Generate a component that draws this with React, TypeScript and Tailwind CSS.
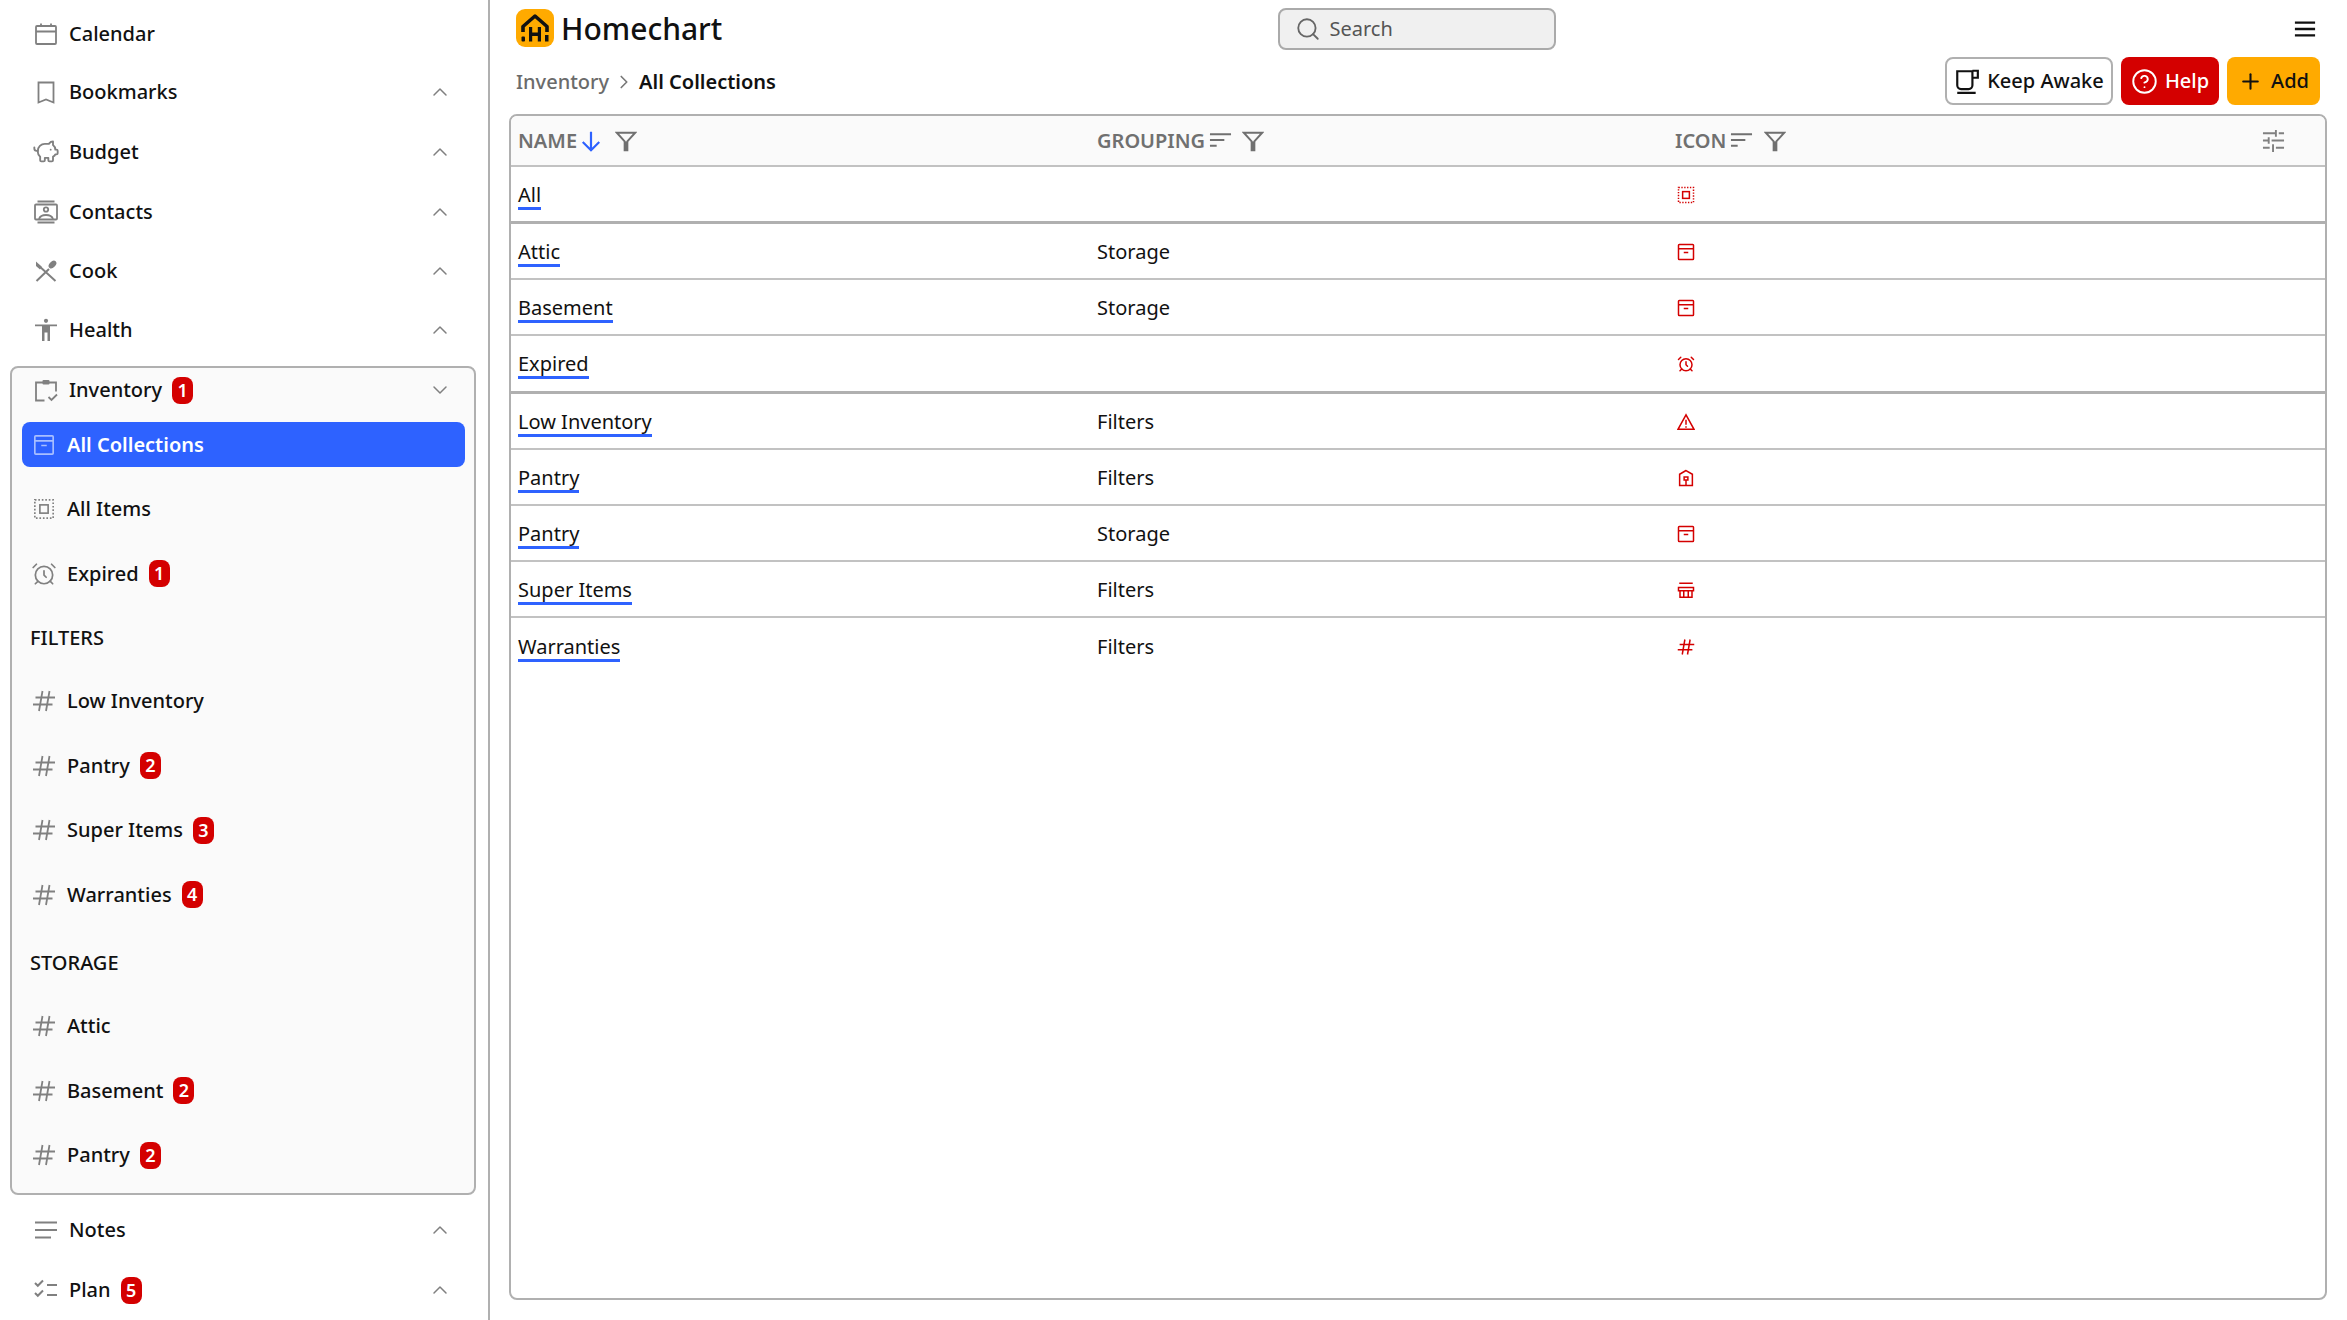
// App.tsx
import type { ReactNode } from "react";
import { AlarmClock, ChevronDown, ChevronRight, ChevronUp, CircleHelp, PiggyBank, Plus, Search } from "lucide-react";

function Svg({ className, width = 1.8, children }: { className?: string; width?: number; children: ReactNode }) {
  return (
    <svg viewBox="0 0 24 24" fill="none" stroke="currentColor" strokeWidth={width} className={className}>
      {children}
    </svg>
  );
}

type IconProps = { className?: string };

const CalendarIcon = ({ className }: IconProps) => (
  <Svg className={className}><rect x="2" y="4" width="20" height="18" rx="1" /><path d="M2 9.500h20M7 1.500v3M17 1.500v3" /></Svg>
);
const BookmarkIcon = ({ className }: IconProps) => (
  <Svg className={className}><path d="M4.500 2.500h15v20l-7.500-3-7.500 3z" /></Svg>
);
const ContactsIcon = ({ className }: IconProps) => (
  <Svg className={className}>
    <path d="M3.500 1.500h17M3.500 22.500h17" />
    <rect x="1" y="4.500" width="22" height="15" rx="1" />
    <circle cx="12" cy="9.500" r="2.200" />
    <path d="M5 19c1-3 4-4 7-4s6 1 7 4" />
  </Svg>
);
const CookIcon = ({ className }: IconProps) => (
  <Svg className={className} width={2}>
    <path d="M2.500 22 15 10M4 6l17.500 16" />
    <ellipse cx="18.500" cy="5.500" rx="3" ry="4.500" transform="rotate(45 18.500 5.500)" fill="currentColor" stroke="none" />
    <path d="M2 2.500 8 8l-2 2.500L2 7z" fill="currentColor" stroke="none" />
  </Svg>
);
const HealthIcon = ({ className }: IconProps) => (
  <svg viewBox="0 0 24 24" fill="currentColor" className={className}>
    <circle cx="12" cy="2.800" r="2.100" />
    <path d="M1 6.500h22v1.800h-7V23h-2.500v-8.500h-3V23H8V8.300H1z" />
  </svg>
);
const InventoryIcon = ({ className }: IconProps) => (
  <Svg className={className}>
    <path d="M9 4.500H2v18h8.500M15 4.500h7v9" />
    <rect x="8.500" y="2" width="7" height="4.500" rx="1" fill="currentColor" stroke="none" />
    <path d="m14.500 19 3 3 5.500-5.500" />
  </Svg>
);
const ArchiveIcon = ({ className }: IconProps) => (
  <Svg className={className}><rect x="2" y="2" width="20" height="20" rx="1" /><path d="M2 7.500h20M9 12.500h6" /></Svg>
);
const SelectAllIcon = ({ className }: IconProps) => (
  <Svg className={className}><rect x="2" y="2" width="20" height="20" strokeDasharray="1.800 2" /><rect x="7.500" y="7.500" width="9" height="9" /></Svg>
);
const HashIcon = ({ className }: IconProps) => (
  <Svg className={className}><path d="M3.500 8.500H23M1 15.500h19.500M10.500 2 7 22M17.500 2 14 22" /></Svg>
);
const NotesIcon = ({ className }: IconProps) => (
  <Svg className={className} width={2}><path d="M1 4.500h22M1 12h22M1 19.500h16" /></Svg>
);
const PlanIcon = ({ className }: IconProps) => (
  <Svg className={className} width={2}><path d="m1 5 2.800 2.800L9 2.500M1 15l2.800 2.800L9 12.500M13 7h10M13 17h10" /></Svg>
);
const FilterIcon = ({ className }: IconProps) => (
  <Svg className={className} width={2.1}>
    <path d="M2 3h20l-8.500 9.500V22h-3v-9.500z" strokeLinejoin="miter" />
    <path d="M10.500 12.500h3V22h-3z" fill="currentColor" stroke="none" />
  </Svg>
);
const SortIcon = ({ className }: IconProps) => (
  <Svg className={className} width={2.3}><path d="M1 5.500h22M1 11.500h15M1 17.500h7" /></Svg>
);
const TuneIcon = ({ className }: IconProps) => (
  <Svg className={className} width={2}>
    <path d="M1 4.500h13M14.500 1v7M17.500 4.500H23M1 12h5M7 8.500v7M10 12h13M1 19.500h7M11.500 16v8M14.500 19.500H23" />
  </Svg>
);
const MugIcon = ({ className }: IconProps) => (
  <Svg className={className} width={2}>
    <path d="M3 3h14v13a3.500 3.500 0 0 1-3.500 3.500h-7A3.500 3.500 0 0 1 3 16zM17 2.500h5V9h-5M3 23h17" />
  </Svg>
);
const MenuIcon = ({ className }: IconProps) => (
  <Svg className={className} width={2.5}><path d="M1 5h22M1 12h22M1 19h22" /></Svg>
);
const WarningIcon = ({ className }: IconProps) => (
  <Svg className={className}><path d="M12 2.500 1.500 21.500h21zM12 9v6.500M12 17.500v2" /></Svg>
);
const PantryIcon = ({ className }: IconProps) => (
  <Svg className={className}><path d="M12 2 3.500 7v15h17V7zM9.500 10.500h5v4h-5zM12 14.500V22" /></Svg>
);
const StoreIcon = ({ className }: IconProps) => (
  <Svg className={className}><path d="M3 3h18M2 8.500h20v4.500H2zM4 13v8.500h16V13M9 13v8.500h6V13" /></Svg>
);

function HomechartLogo() {
  return (
    <svg viewBox="0 0 38 38" className="h-[38px] w-[38px] shrink-0">
      <rect width="38" height="38" rx="9" fill="#ffaa00" />
      <path d="M7 23v-5.500L19 7l12 10.500V23" fill="none" stroke="#111" strokeWidth="3.600" strokeLinejoin="round" />
      <rect x="5.500" y="27.500" width="3.500" height="5" rx="1" fill="#111" />
      <rect x="29" y="26" width="3.500" height="6.500" fill="#111" />
      <path d="M13 18v14.500h3.200V27h5.600v5.500H25V18h-3.200v5.500h-5.600V18z" fill="#111" />
    </svg>
  );
}

function Badge({ n }: { n: number }) {
  return (
    <span className="ml-[10px] flex h-[27px] w-[21px] shrink-0 items-center justify-center rounded-[8px] bg-[#d40000] text-[18px] font-semibold text-white">
      {n}
    </span>
  );
}

const TOP_ICON = "h-6 w-6 shrink-0 text-[#808080]";
const SUB_ICON = "h-[22px] w-[22px] shrink-0 text-[#808080]";
const CHEVRON = "h-6 w-6 shrink-0 text-[#808080]";

function TopItem({ icon, label, badge, height, chevron = true }: { icon: ReactNode; label: string; badge?: number; height: string; chevron?: boolean }) {
  return (
    <div className={`flex items-center pl-[34px] pr-[36px] ${height}`}>
      {icon}
      <span className="ml-[11px]">{label}</span>
      {badge !== undefined && <Badge n={badge} />}
      {chevron && <ChevronUp strokeWidth={1.5} className={`ml-auto ${CHEVRON}`} />}
    </div>
  );
}

function SubItem({ icon, label, badge, height }: { icon: ReactNode; label: string; badge?: number; height: string }) {
  return (
    <div className={`flex items-center pl-[21px] ${height}`}>
      {icon}
      <span className="ml-[12px]">{label}</span>
      {badge !== undefined && <Badge n={badge} />}
    </div>
  );
}

const hash = <HashIcon className="-mx-px h-6 w-6 shrink-0 text-[#808080]" />;

function Sidebar() {
  return (
    <nav className="flex h-full w-[490px] shrink-0 flex-col overflow-hidden border-r-2 border-[#b0b0b0] bg-white text-[20px] font-medium text-[#111]">
      <div className="mt-[6px]">
        <TopItem height="h-[56px]" chevron={false} icon={<CalendarIcon className={TOP_ICON} />} label="Calendar" />
      </div>
      <TopItem height="h-[59px]" icon={<BookmarkIcon className={TOP_ICON} />} label="Bookmarks" />
      <TopItem height="h-[61px]" icon={<PiggyBank strokeWidth={1.6} className="-mx-[2px] h-7 w-7 shrink-0 text-[#808080]" />} label="Budget" />
      <TopItem height="h-[59px]" icon={<ContactsIcon className={TOP_ICON} />} label="Contacts" />
      <TopItem height="h-[59px]" icon={<CookIcon className={TOP_ICON} />} label="Cook" />
      <TopItem height="h-[60px]" icon={<HealthIcon className={TOP_ICON} />} label="Health" />

      <div className="ml-[10px] mt-[6px] h-[829px] w-[466px] shrink-0 rounded-lg border-2 border-[#b0b0b0] bg-[#fafafa]">
        <div className="flex h-[44px] items-center pl-[22px] pr-[22px]">
          <InventoryIcon className={TOP_ICON} />
          <span className="ml-[11px]">Inventory</span>
          <Badge n={1} />
          <ChevronDown strokeWidth={1.5} className={`ml-auto ${CHEVRON}`} />
        </div>
        <div className="ml-[10px] mt-[10px] flex h-[45px] w-[443px] items-center rounded-lg bg-[#2e62ff] pl-[11px] font-semibold text-white">
          <ArchiveIcon className="h-[22px] w-[22px] shrink-0 text-[#a9bfff]" />
          <span className="ml-[12px]">All Collections</span>
        </div>
        <div className="mt-[10px]">
          <SubItem height="h-[64px]" icon={<SelectAllIcon className={SUB_ICON} />} label="All Items" />
        </div>
        <SubItem height="h-[65px]" icon={<AlarmClock strokeWidth={1.6} className="-mx-[2px] h-[26px] w-[26px] shrink-0 text-[#808080]" />} label="Expired" badge={1} />
        <div className="flex h-[63px] items-center pl-[18px]">FILTERS</div>
        <SubItem height="h-[64px]" icon={hash} label="Low Inventory" />
        <SubItem height="h-[65px]" icon={hash} label="Pantry" badge={2} />
        <SubItem height="h-[64px]" icon={hash} label="Super Items" badge={3} />
        <SubItem height="h-[65px]" icon={hash} label="Warranties" badge={4} />
        <div className="flex h-[67px] items-center pl-[18px] pt-[5px]">STORAGE</div>
        <SubItem height="h-[64px]" icon={hash} label="Attic" />
        <SubItem height="h-[65px]" icon={hash} label="Basement" badge={2} />
        <SubItem height="h-[64px]" icon={hash} label="Pantry" badge={2} />
      </div>

      <div className="mt-[5px]">
        <TopItem height="h-[60px]" icon={<NotesIcon className={TOP_ICON} />} label="Notes" />
      </div>
      <TopItem height="h-[60px]" icon={<PlanIcon className={TOP_ICON} />} label="Plan" badge={5} />
    </nav>
  );
}

function Header() {
  return (
    <>
      <div className="grid h-[57px] grid-cols-[1fr_auto_1fr] items-center pl-[26px] pr-[31px]">
        <div className="flex items-center gap-[7px] pb-[1px]">
          <HomechartLogo />
          <span className="pt-[2px] text-[30px] font-medium leading-none text-[#111]">Homechart</span>
        </div>
        <div className="ml-[1px] flex h-[42px] w-[278px] items-center rounded-lg border-2 border-[#aaaaaa] bg-[#f0f0f0] pl-[15px] text-[20px] text-[#555]">
          <Search strokeWidth={1.7} className="h-[26px] w-[26px] text-[#666]" />
          <span className="ml-[9px]">Search</span>
        </div>
        <MenuIcon className="ml-auto h-[22px] w-[22px] text-[#111]" />
      </div>
      <div className="flex h-[48px] items-center pl-[26px] pr-[27px] text-[20px] font-medium">
        <span className="pt-[2px] text-[#6b6b6b]">Inventory</span>
        <ChevronRight strokeWidth={1.8} className="mx-[4px] mt-[2px] h-[22px] w-[22px] text-[#777]" />
        <span className="pt-[2px] font-semibold text-[#111]">All Collections</span>
        <div className="ml-auto flex gap-[8px]">
          <div className="flex h-[48px] w-[168px] items-center justify-center gap-[7px] rounded-lg border-2 border-[#b0b0b0] bg-white text-[#111]">
            <MugIcon className="h-[26px] w-[26px]" />
            <span>Keep Awake</span>
          </div>
          <div className="flex h-[48px] w-[98px] items-center justify-center gap-[7px] rounded-lg bg-[#d40000] text-white">
            <CircleHelp strokeWidth={1.7} className="h-[27px] w-[27px]" />
            <span>Help</span>
          </div>
          <div className="flex h-[48px] w-[93px] items-center justify-center gap-[8px] rounded-lg bg-[#ffaa00] text-[#111]">
            <Plus strokeWidth={2} className="h-[25px] w-[25px]" />
            <span>Add</span>
          </div>
        </div>
      </div>
    </>
  );
}

const ICON_RED = "h-[18px] w-[18px] stroke-[2] text-[#d40000]";

const ROWS: { name: string; grouping: string; icon: ReactNode; height: string }[] = [
  { name: "All", grouping: "", icon: <SelectAllIcon className={ICON_RED} />, height: "h-[57px] border-b-[3px] border-[#b0b0b0]" },
  { name: "Attic", grouping: "Storage", icon: <ArchiveIcon className={ICON_RED} />, height: "h-[56px] border-b-2 border-[#c2c2c2]" },
  { name: "Basement", grouping: "Storage", icon: <ArchiveIcon className={ICON_RED} />, height: "h-[56px] border-b-2 border-[#c2c2c2]" },
  { name: "Expired", grouping: "", icon: <AlarmClock className={ICON_RED} />, height: "h-[58px] border-b-[3px] border-[#b0b0b0]" },
  { name: "Low Inventory", grouping: "Filters", icon: <WarningIcon className={ICON_RED} />, height: "h-[56px] border-b-2 border-[#c2c2c2]" },
  { name: "Pantry", grouping: "Filters", icon: <PantryIcon className={ICON_RED} />, height: "h-[56px] border-b-2 border-[#c2c2c2]" },
  { name: "Pantry", grouping: "Storage", icon: <ArchiveIcon className={ICON_RED} />, height: "h-[56px] border-b-2 border-[#c2c2c2]" },
  { name: "Super Items", grouping: "Filters", icon: <StoreIcon className={ICON_RED} />, height: "h-[56px] border-b-2 border-[#c2c2c2]" },
  { name: "Warranties", grouping: "Filters", icon: <HashIcon className={ICON_RED} />, height: "h-[57px]" },
];

function CollectionsTable() {
  return (
    <div className="ml-[19px] mt-[9px] h-[1186px] w-[1818px] overflow-hidden rounded-lg border-2 border-[#b0b0b0] bg-white text-[20px] text-[#111]">
      <div className="grid h-[51px] grid-cols-[579px_578px_1fr] items-center border-b-2 border-[#c2c2c2] bg-[#fafafa] text-[20px] font-semibold text-[#707070]">
        <div className="flex items-center pl-[7px]">
          <span>NAME</span>
          <svg viewBox="0 0 24 24" fill="none" stroke="#2e62ff" strokeWidth="2.4" className="ml-[3px] h-[24px] w-[22px]">
            <path d="M12 2v20M3 13l9 9 9-9" />
          </svg>
          <FilterIcon className="ml-[13px] h-[22px] w-[22px] text-[#707070]" />
        </div>
        <div className="flex items-center pl-[7px]">
          <span>GROUPING</span>
          <SortIcon className="ml-[4px] h-[23px] w-[23px] text-[#707070]" />
          <FilterIcon className="ml-[10px] h-[22px] w-[22px] text-[#707070]" />
        </div>
        <div className="flex items-center pl-[7px] pr-[40px]">
          <span>ICON</span>
          <SortIcon className="ml-[4px] h-[23px] w-[23px] text-[#707070]" />
          <FilterIcon className="ml-[11px] h-[22px] w-[22px] text-[#707070]" />
          <TuneIcon className="ml-auto h-[23px] w-[23px] text-[#808080]" />
        </div>
      </div>
      {ROWS.map((r, i) => (
        <div key={i} className={`grid grid-cols-[579px_578px_1fr] items-center pt-[1px] ${r.height}`}>
          <div className="pl-[7px]">
            <span className="inline-block border-b-[3px] border-[#2e62ff] leading-[25px]">{r.name}</span>
          </div>
          <div className="pl-[7px]">{r.grouping}</div>
          <div className="pl-[9px]">{r.icon}</div>
        </div>
      ))}
    </div>
  );
}

export default function App() {
  return (
    <div className="flex h-[1320px] w-[2347px] overflow-hidden bg-white font-['Noto_Sans',sans-serif]">
      <Sidebar />
      <main className="flex h-full min-w-0 flex-1 flex-col">
        <Header />
        <CollectionsTable />
      </main>
    </div>
  );
}
